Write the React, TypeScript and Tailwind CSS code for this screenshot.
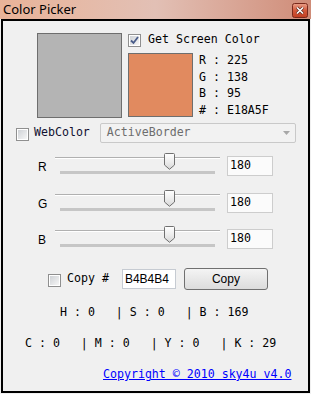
import React from 'react';

const mono = { fontFamily: '"DejaVu Sans Mono", "Liberation Mono", monospace' };
const sans = { fontFamily: '"Liberation Sans", Arial, sans-serif' };

const CheckBox = ({ checked = false }: { checked?: boolean }) => (
  <div className="w-[13px] h-[13px] shrink-0 border border-[#8f8f8f] bg-white p-[1px]">
    <div className="w-full h-full bg-gradient-to-br from-[#cfd2d6] to-[#f6f6f6] flex items-center justify-center">
      {checked && (
        <svg width="9" height="9" viewBox="0 0 9 9">
          <path d="M1 4.5 L3.5 7 L8 1" fill="none" stroke="#4a5d8a" strokeWidth="1.8" />
        </svg>
      )}
    </div>
  </div>
);

const SliderRow = ({ label, value }: { label: string; value: number }) => (
  <div className="flex items-start h-[20px]">
    <div className="ml-[35px] w-[17px] h-[20px] flex items-center text-[12px] text-black pt-[2px]" style={sans}>
      {label}
    </div>
    <div className="relative w-[165px] h-[20px]">
      <div className="mt-[1px] h-[2px] border-t border-[#b0b0b0] border-b border-b-white bg-[#e4e4e4]" />
      <div className="mt-[12px] mx-[5px] h-[3px] bg-[#c6c6c6]" />
      <svg className="absolute left-[109px] top-[-3px]" width="11" height="17" viewBox="0 0 11 17">
        <defs>
          <linearGradient id={`th${label}`} x1="0" y1="0" x2="0" y2="1">
            <stop offset="0" stopColor="#ffffff" />
            <stop offset="0.55" stopColor="#ececec" />
            <stop offset="1" stopColor="#d6d6d6" />
          </linearGradient>
        </defs>
        <path d="M1.5 0.5 H9.5 A1 1 0 0 1 10.5 1.5 V12 L5.5 16.3 L0.5 12 V1.5 A1 1 0 0 1 1.5 0.5 Z" fill={`url(#th${label})`} stroke="#707070" />
      </svg>
    </div>
    <div className="ml-[7px] w-[46px] h-[20px] border border-[#cdcdcd] bg-[#fbfbfb] flex items-center pl-[2px] text-[11.6px] text-black" style={mono}>
      {value}
    </div>
  </div>
);

export default function App() {
  return (
    <div className="w-[311px] h-[394px] flex flex-col bg-[#f0f0f0] overflow-hidden">
      <div className="h-[19px] shrink-0 flex items-center justify-between bg-gradient-to-r from-[#e9b398] via-[#e2c0b5] to-[#cf8c78]">
        <span className="ml-[3px] text-[13px] text-black leading-none" style={{ fontFamily: '"Noto Sans", "Open Sans", sans-serif' }}>
          Color Picker
        </span>
        <svg className="mr-[3px] mt-[1px]" width="16" height="15" viewBox="0 0 16 15">
          <defs>
            <linearGradient id="cls" x1="0" y1="0" x2="0" y2="1">
              <stop offset="0" stopColor="#e9a08a" />
              <stop offset="0.5" stopColor="#d2593b" />
              <stop offset="1" stopColor="#c23d20" />
            </linearGradient>
          </defs>
          <rect x="0.5" y="0.5" width="15" height="14" rx="2" fill="url(#cls)" stroke="#7a2a1c" />
          <path d="M5 4.5 L11 10.5 M11 4.5 L5 10.5" stroke="#5a2a20" strokeWidth="3" />
          <path d="M5 4.5 L11 10.5 M11 4.5 L5 10.5" stroke="#ffffff" strokeWidth="1.6" />
        </svg>
      </div>

      <div className="flex-1 mx-[1px] mb-[1px] border-2 border-black bg-[#f0f0f0] flex flex-col text-black" style={mono}>
        <div className="flex mt-[12px] ml-[34px]">
          <div className="w-[85px] h-[85px] border border-[#6e6e6e] bg-[#b4b4b4]" />
          <div className="ml-[6px] flex flex-col">
            <div className="h-[14px] flex items-center">
              <CheckBox checked />
              <span className="ml-[7px] text-[11.6px] leading-none">Get Screen Color</span>
            </div>
            <div className="mt-[6px] flex">
              <div className="w-[65px] h-[64px] border border-[#6e6e6e] bg-[#e18a5f]" />
              <div className="ml-[6px] -mt-[1px] flex flex-col text-[11.6px] leading-[16.5px] whitespace-pre">
                <span>R : 225</span>
                <span>G : 138</span>
                <span>B : 95</span>
                <span># : E18A5F</span>
              </div>
            </div>
          </div>
        </div>

        <div className="mt-[5px] h-[20px] flex items-center">
          <div className="ml-[13px] mt-[2px]">
            <CheckBox />
          </div>
          <span className="ml-[5px] text-[11.6px] text-[#101030]">WebColor</span>
          <div className="ml-[10px] w-[196px] h-[20px] border border-[#c9c9c9] rounded-[2px] bg-[#f2f2f2] flex items-center justify-between pl-[6px] pr-[5px]">
            <span className="text-[11.6px] text-[#6d6d6d]">ActiveBorder</span>
            <svg width="7" height="4" viewBox="0 0 7 4">
              <path d="M0 0 H7 L3.5 4 Z" fill="#a8a8a8" />
            </svg>
          </div>
        </div>

        <div className="mt-[13px]">
          <SliderRow label="R" value={180} />
        </div>
        <div className="mt-[17px]">
          <SliderRow label="G" value={180} />
        </div>
        <div className="mt-[16px]">
          <SliderRow label="B" value={180} />
        </div>

        <div className="mt-[19px] h-[22px] flex items-center">
          <div className="ml-[45px] mt-[2px]">
            <CheckBox />
          </div>
          <span className="ml-[6px] text-[11.6px] whitespace-pre">Copy #</span>
          <div className="ml-[13px] w-[54px] h-[20px] border border-[#c6cbd2] bg-white flex items-center pl-[2px] text-[12px]" style={sans}>
            B4B4B4
          </div>
          <div className="ml-[8px] w-[84px] h-[22px] rounded-[3px] border border-[#707070] bg-gradient-to-b from-[#f4f4f4] to-[#dcdcdc] flex items-center justify-center text-[12px]" style={sans}>
            Copy
          </div>
        </div>

        <div className="mt-[14px] ml-[57px] text-[11.6px] leading-[16px] whitespace-pre">H : 0   | S : 0   | B : 169</div>
        <div className="mt-[15px] ml-[22px] text-[11.6px] leading-[16px] whitespace-pre">C : 0   | M : 0   | Y : 0   | K : 29</div>
        <div className="mt-[15px] ml-[100px] text-[11.6px] leading-[16px] whitespace-pre text-[#0000ff] underline">
          Copyright © 2010 sky4u v4.0
        </div>
      </div>
    </div>
  );
}
